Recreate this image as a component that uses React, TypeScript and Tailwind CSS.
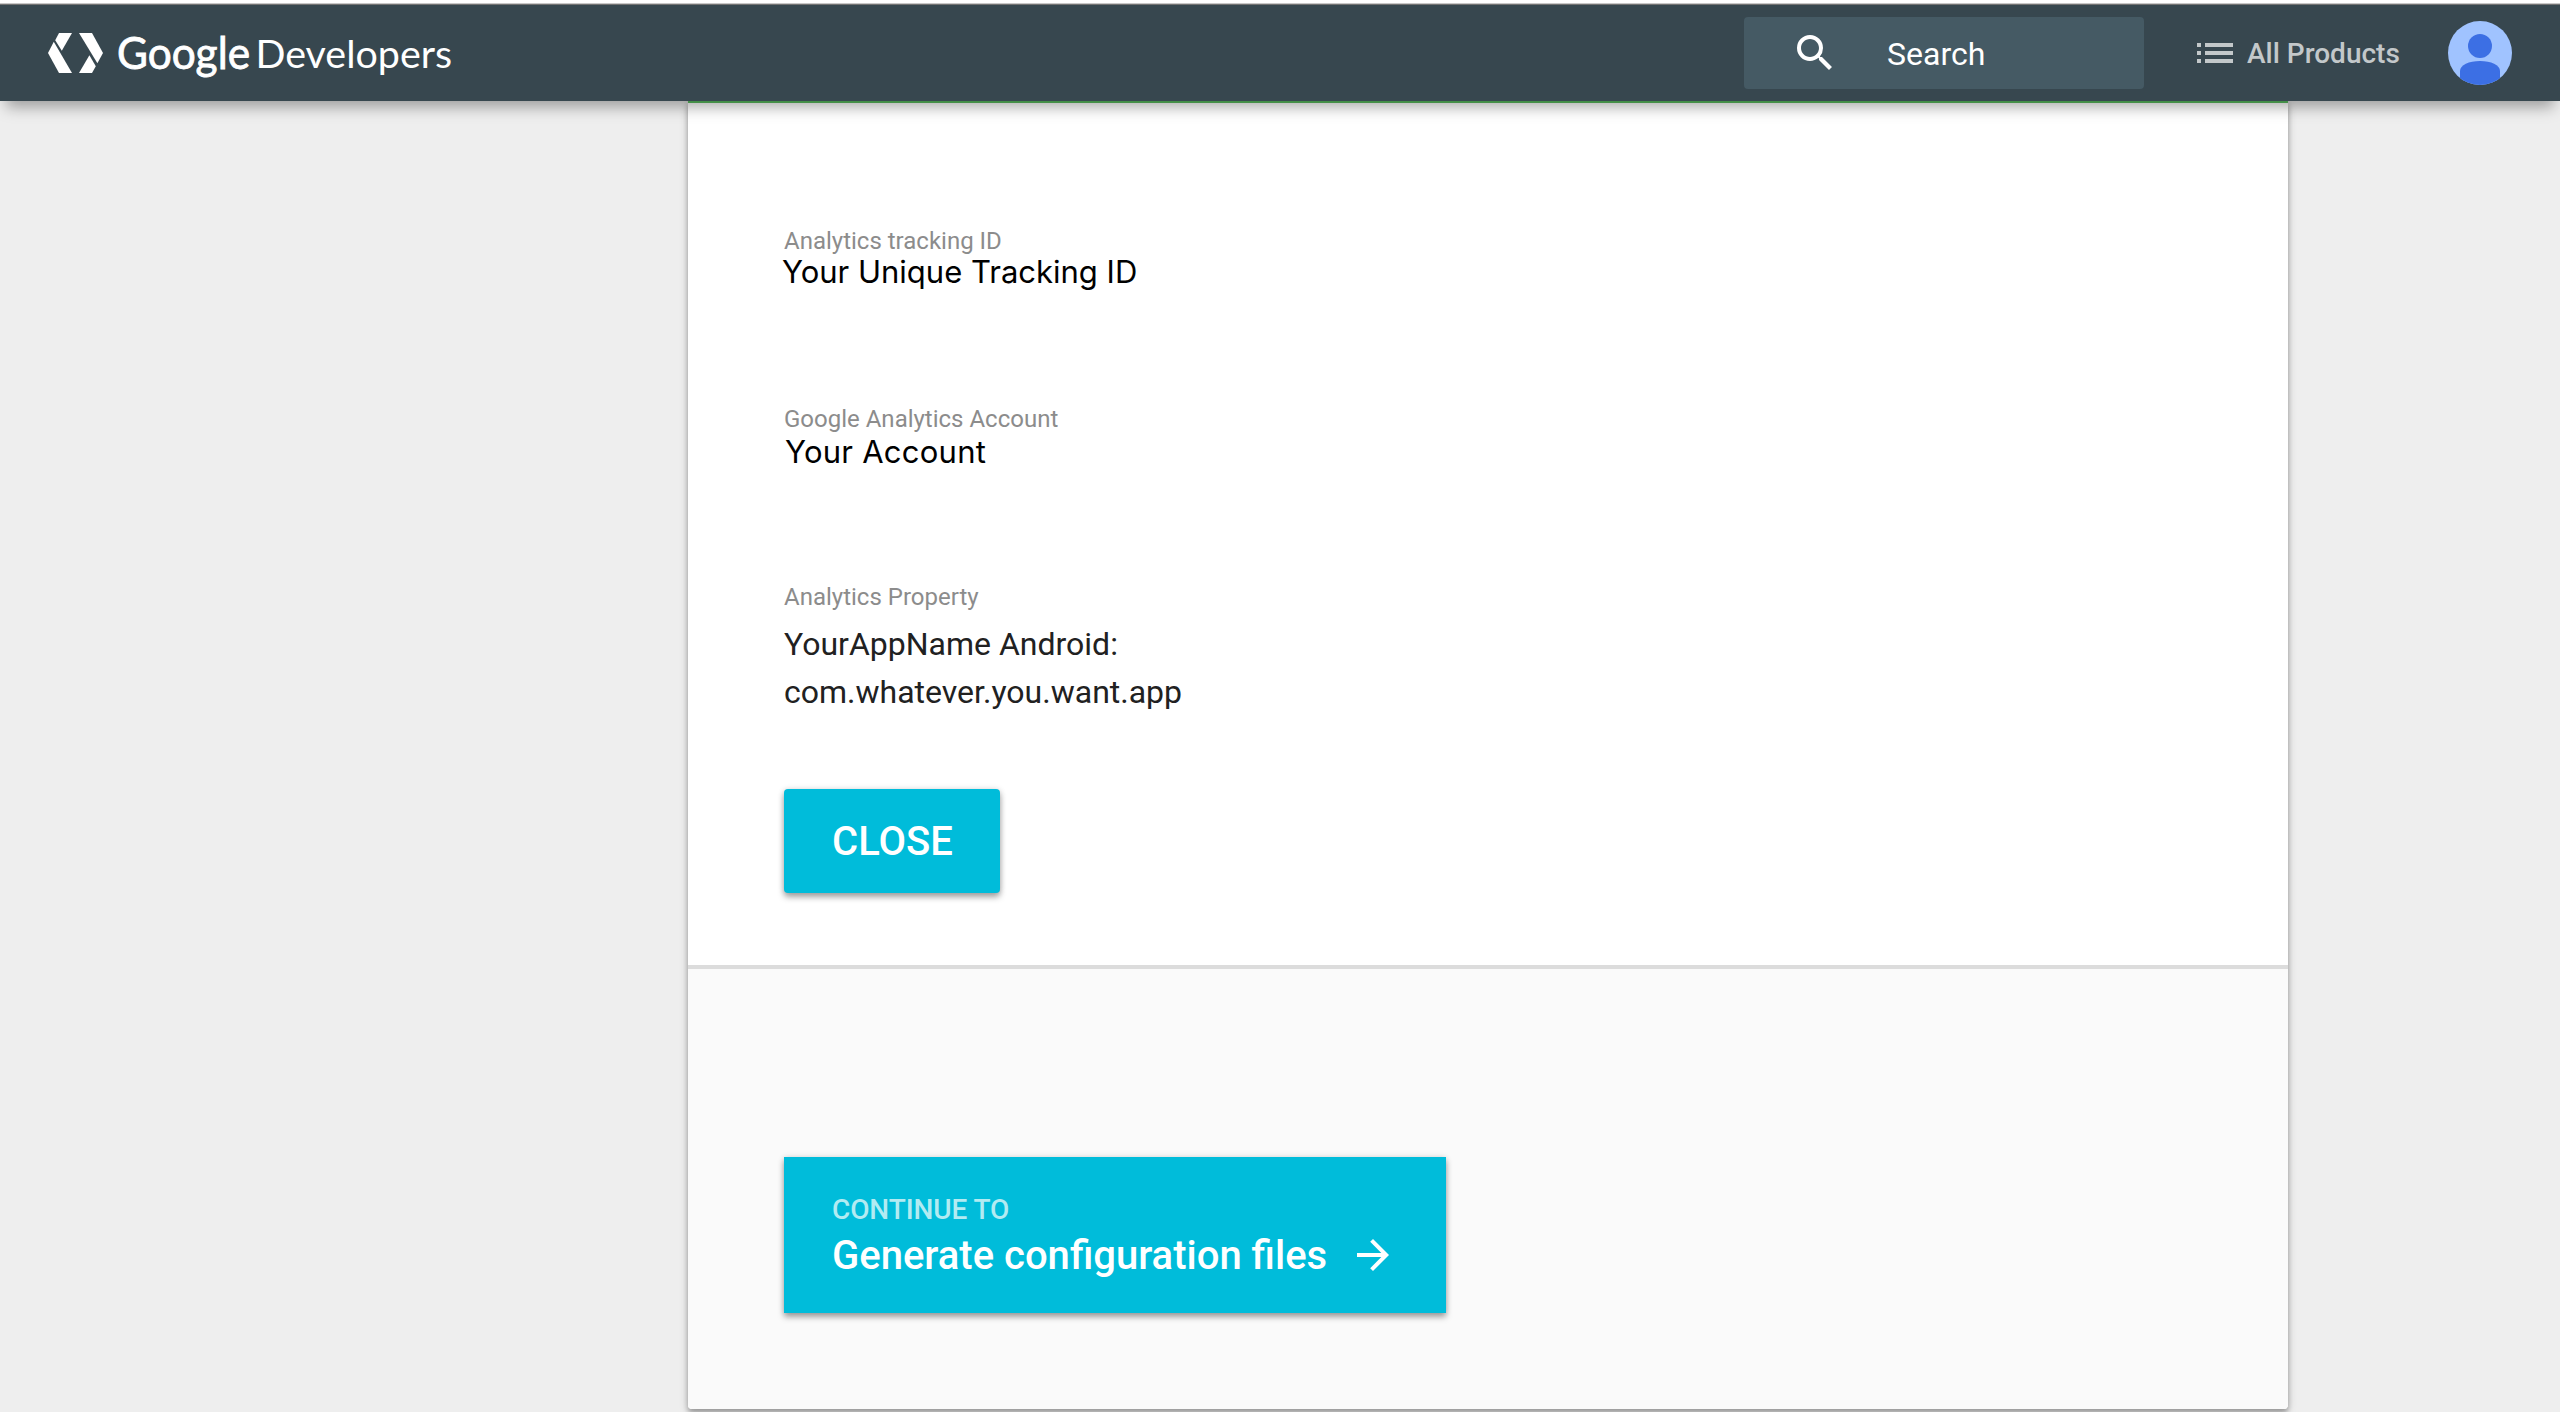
import React from "react";

function Logo() {
  return (
    <svg className="h-[96px] w-[420px] shrink-0" viewBox="48 5 420 96" fill="#fff" role="img" aria-label="Google Developers">
      <path d="M59 33H72L61.8 50.8L55.2 40.2Z" />
      <path d="M53.8 41.8L72 73H59L48 53Z" />
      <path d="M79 33H92L103 53L97.4 63.2Z" />
      <path d="M89.4 55.2L95.8 66.2L92 73H79Z" />
      <text x="117" y="68.500" fontFamily="Lato, sans-serif" fontSize="44" textLength="133" lengthAdjust="spacingAndGlyphs" stroke="#fff" strokeWidth="0.800">
        Google
      </text>
      <text x="255.500" y="68" fontFamily="Lato, sans-serif" fontSize="39.500" textLength="196.500" lengthAdjust="spacingAndGlyphs">
        Developers
      </text>
    </svg>
  );
}

function Avatar() {
  return (
    <svg className="size-16 shrink-0" viewBox="0 0 64 64">
      <defs>
        <clipPath id="avatar-clip">
          <circle cx="32" cy="32" r="32" />
        </clipPath>
      </defs>
      <g clipPath="url(#avatar-clip)">
        <rect width="64" height="64" fill="#a0c3ff" />
        <circle cx="32" cy="25" r="12" fill="#3c6fe4" />
        <path d="M12 64V50C12 44 21 40 32 40S52 44 52 50V64Z" fill="#3c6fe4" />
      </g>
    </svg>
  );
}

function Header() {
  return (
    <header className="relative z-10 flex h-24 shrink-0 items-center bg-[#37474f] pl-12 pr-12 shadow-[0_12px_14px_-6px_rgba(0,0,0,0.34)]">
      <Logo />
      <div className="ml-auto flex h-[72px] w-[400px] items-center rounded bg-[#455a64]">
        <svg className="ml-[47px] size-12" viewBox="0 0 24 24" fill="#fff">
          <path d="M15.500 14h-.79l-.28-.27A6.471 6.471 0 0 0 16 9.500 6.500 6.500 0 1 0 9.500 16c1.610 0 3.090-.59 4.230-1.570l.27.28v.79l5 4.990L20.490 19l-4.990-5zm-6 0C7.010 14 5 11.990 5 9.500S7.010 5 9.500 5 14 7.010 14 9.500 11.990 14 9.500 14z" />
        </svg>
        <span className="ml-12 pt-[2px] text-[32px] leading-none text-white">Search</span>
      </div>
      <div className="ml-[53px] flex items-center text-[#c3c8ca]">
        <svg className="h-5 w-9" viewBox="0 0 36 20" fill="currentColor">
          <path d="M0 0h4v4H0zM8 0h28v4H8zM0 8h4v4H0zM8 8h28v4H8zM0 16h4v4H0zM8 16h28v4H8z" />
        </svg>
        <span className="ml-[14px] w-[154px] whitespace-nowrap pt-[2px] text-[28px] font-medium leading-none">All Products</span>
      </div>
      <div className="ml-[47px]">
        <Avatar />
      </div>
    </header>
  );
}

function Label({ children }: { children: React.ReactNode }) {
  return <div className="text-[24px] leading-7 text-[#8c8c8c]">{children}</div>;
}

export default function App() {
  return (
    <div className="flex h-[1412px] w-[2560px] flex-col overflow-hidden bg-[#eeeeee] font-['Roboto',sans-serif]">
      <div className="flex h-[5px] shrink-0 flex-col justify-end border-b border-[#737373] bg-white">
        <div className="h-px bg-[#c8c8c8]" />
      </div>
      <Header />
      <main className="ml-[688px] w-[1600px] rounded-b border-t-2 border-[#5cc062] bg-white shadow-[0_2px_10px_rgba(0,0,0,0.2),0_4px_5px_rgba(0,0,0,0.25)]">
        <section className="flex h-[866px] flex-col items-start border-b-4 border-[#dcdcdc] pl-24 pt-[124px]">
          <Label>Analytics tracking ID</Label>
          <div className="-ml-[2px] mt-px font-['Inter',sans-serif] text-[31px] leading-8 text-black">Your Unique Tracking ID</div>
          <div className="mt-[117px]">
            <Label>Google Analytics Account</Label>
          </div>
          <div className="ml-px mt-[3px] font-['Inter',sans-serif] text-[31px] leading-8 tracking-[0.25px] text-black">Your Account</div>
          <div className="mt-[115px]">
            <Label>Analytics Property</Label>
          </div>
          <div className="mt-[9px] text-[32px] leading-[48px] text-[#212121]">
            YourAppName Android:
            <br />
            com.whatever.you.want.app
          </div>
          <button className="mt-[73px] h-[104px] w-[216px] rounded bg-[#00bcda] pl-px pt-[2px] text-[40px] font-medium text-white shadow-[0_4px_6px_rgba(0,0,0,0.35),0_0_6px_rgba(0,0,0,0.12)]">
            CLOSE
          </button>
        </section>
        <section className="h-[440px] rounded-b bg-[#fafafa] pl-24 pt-[188px]">
          <button className="flex h-[156px] w-[662px] flex-col items-start bg-[#00bcda] pl-12 pt-[37px] text-left shadow-[0_4px_6px_rgba(0,0,0,0.35),0_0_6px_rgba(0,0,0,0.12)]">
            <span className="text-[28px] font-medium leading-8 tracking-[-0.1px] text-[#b2ebf2]">CONTINUE TO</span>
            <span className="mt-[6px] flex items-center text-[40px] font-medium leading-[48px] text-white">
              Generate configuration files
              <svg className="-mt-[3px] ml-[22px] size-12" viewBox="0 0 24 24" fill="currentColor">
                <path d="M12 4l-1.410 1.410L16.170 11H4v2h12.170l-5.580 5.590L12 20l8-8z" />
              </svg>
            </span>
          </button>
        </section>
      </main>
    </div>
  );
}
